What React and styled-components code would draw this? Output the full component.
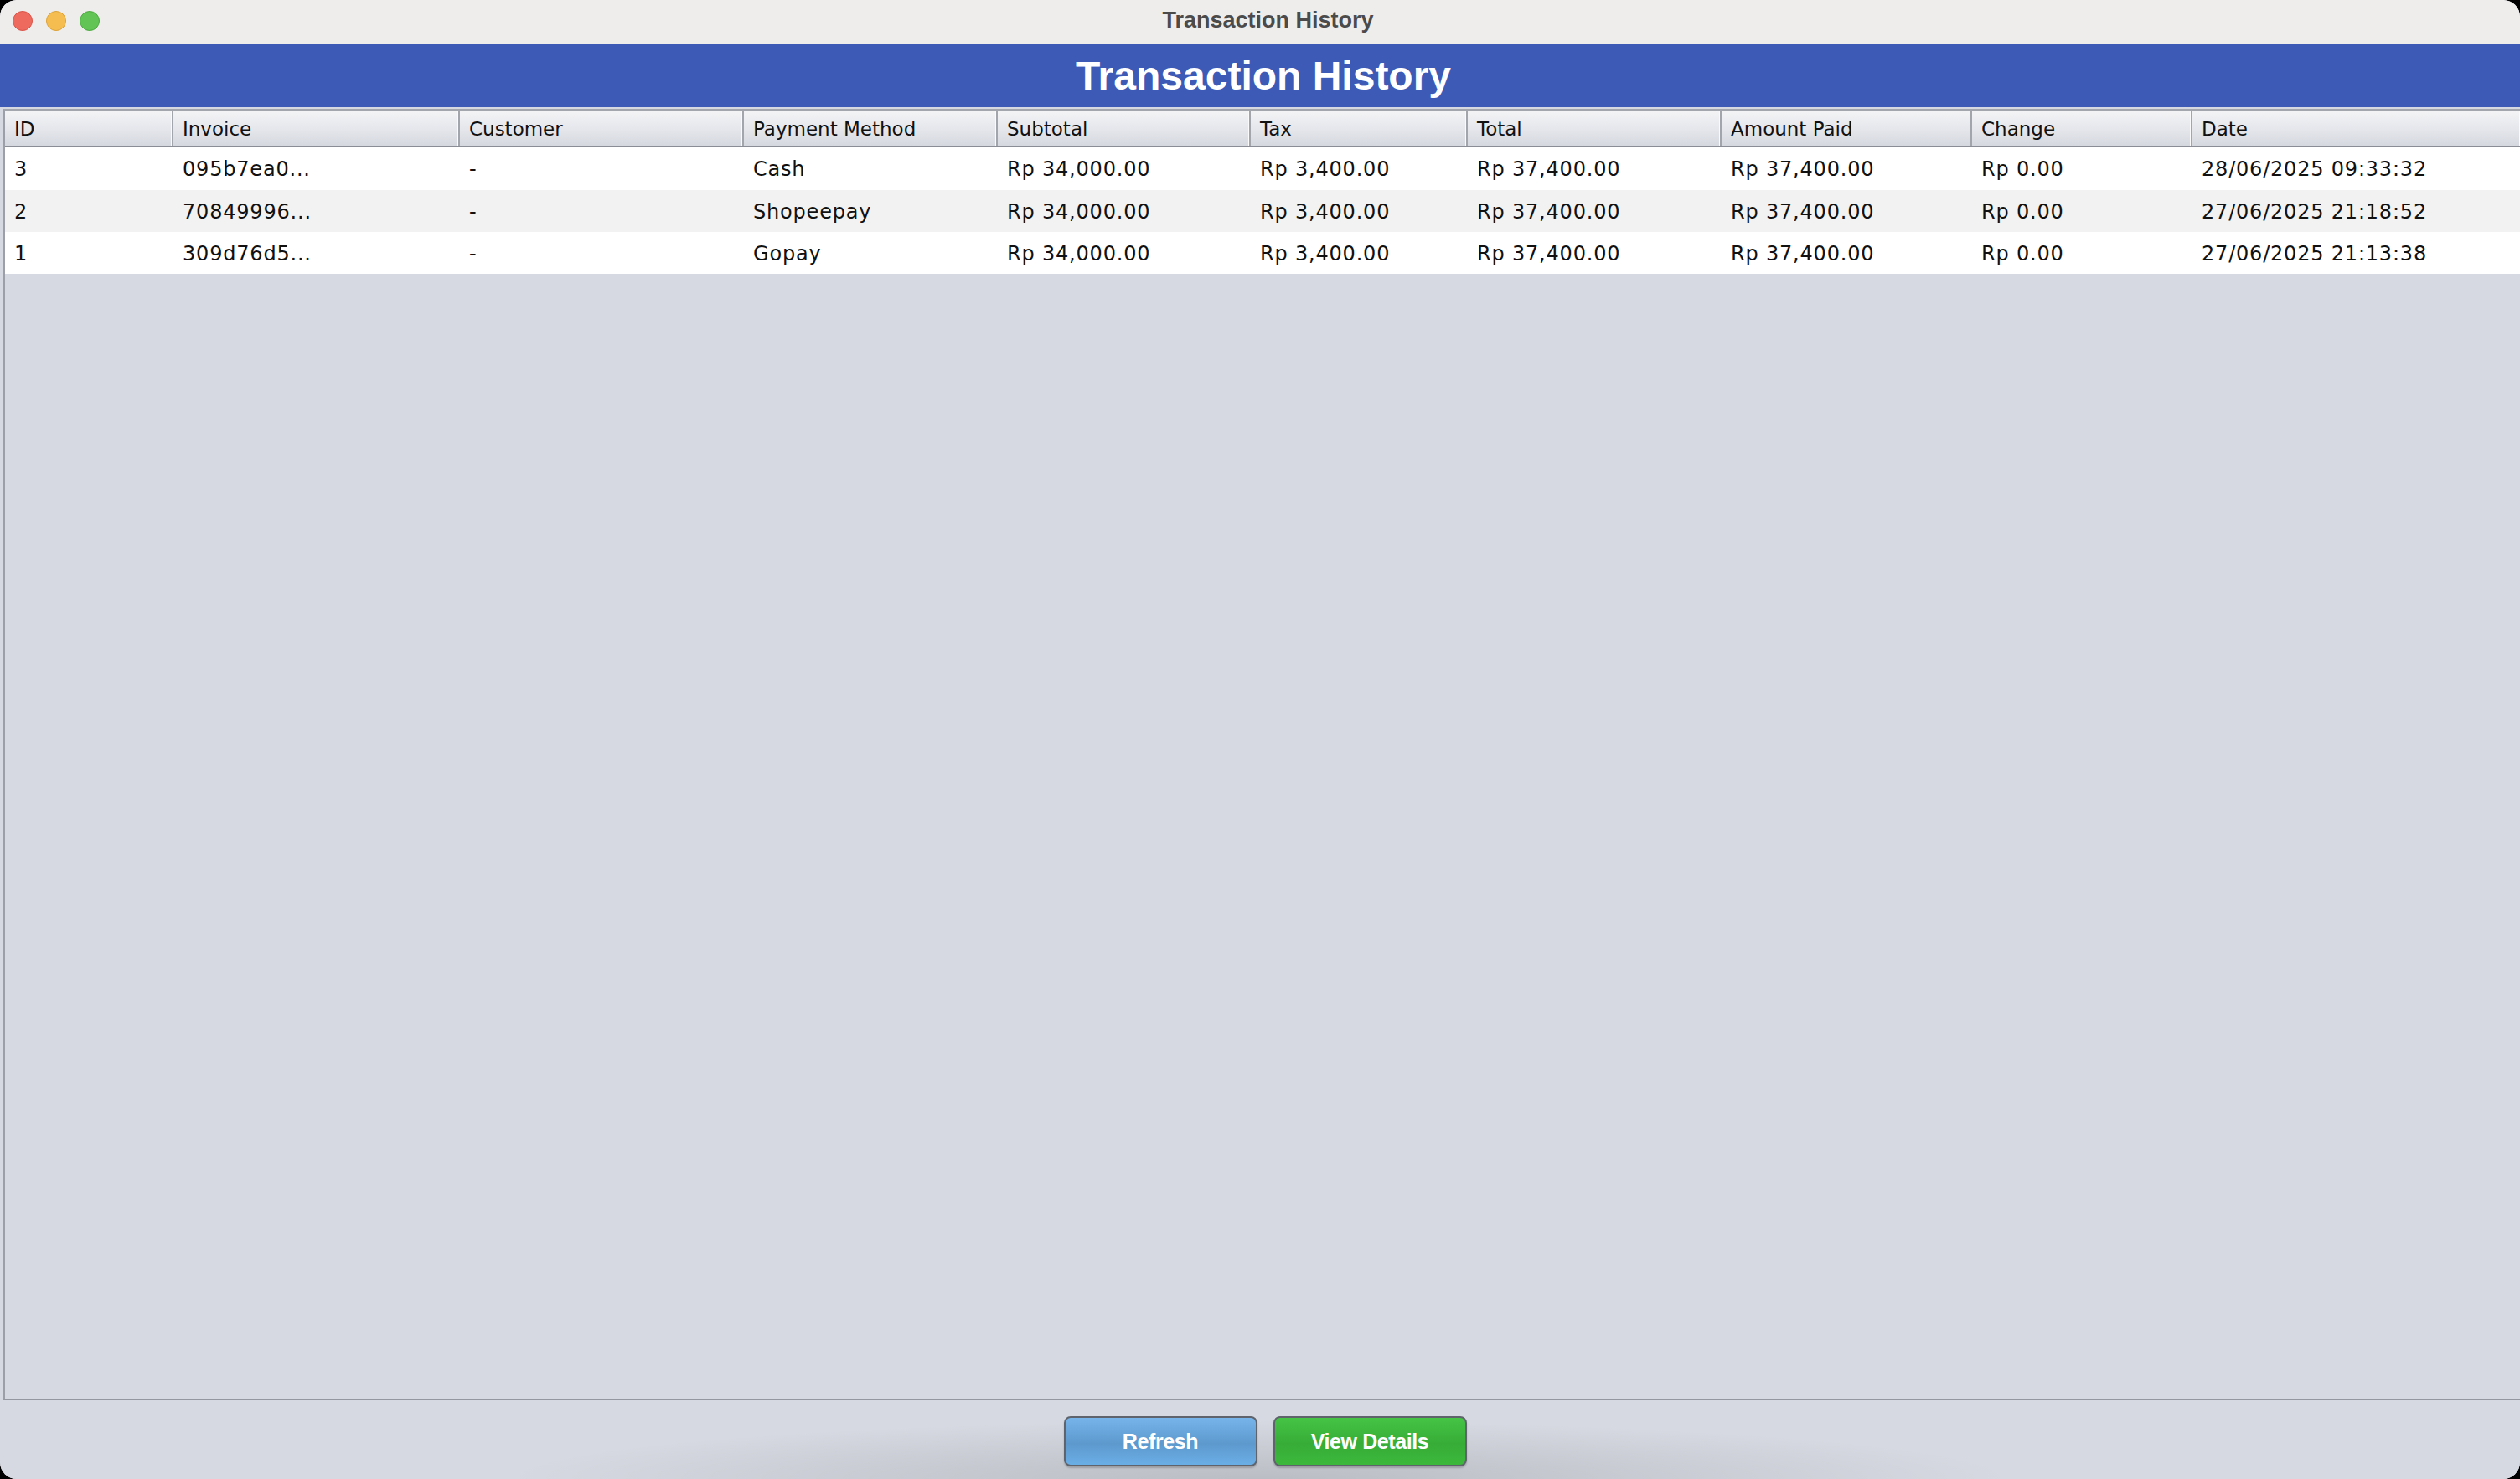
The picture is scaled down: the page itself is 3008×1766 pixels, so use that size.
import React from "react";
import styled, { createGlobalStyle } from "styled-components";

const GlobalStyle = createGlobalStyle`
  html, body {
    margin: 0;
    padding: 0;
    background: #000;
  }
  body {
    width: 3008px;
    height: 1766px;
    overflow: hidden;
    font-family: "DejaVu Sans", "Liberation Sans", sans-serif;
  }
`;

const columns = [
  { key: "id", label: "ID", width: 201 },
  { key: "invoice", label: "Invoice", width: 342 },
  { key: "customer", label: "Customer", width: 339 },
  { key: "method", label: "Payment Method", width: 303 },
  { key: "subtotal", label: "Subtotal", width: 302 },
  { key: "tax", label: "Tax", width: 259 },
  { key: "total", label: "Total", width: 303 },
  { key: "paid", label: "Amount Paid", width: 299 },
  { key: "change", label: "Change", width: 263 },
  { key: "date", label: "Date", width: null },
];

const transactions = [
  {
    id: "3",
    invoice: "095b7ea0...",
    customer: "-",
    method: "Cash",
    subtotal: "Rp 34,000.00",
    tax: "Rp 3,400.00",
    total: "Rp 37,400.00",
    paid: "Rp 37,400.00",
    change: "Rp 0.00",
    date: "28/06/2025 09:33:32",
  },
  {
    id: "2",
    invoice: "70849996...",
    customer: "-",
    method: "Shopeepay",
    subtotal: "Rp 34,000.00",
    tax: "Rp 3,400.00",
    total: "Rp 37,400.00",
    paid: "Rp 37,400.00",
    change: "Rp 0.00",
    date: "27/06/2025 21:18:52",
  },
  {
    id: "1",
    invoice: "309d76d5...",
    customer: "-",
    method: "Gopay",
    subtotal: "Rp 34,000.00",
    tax: "Rp 3,400.00",
    total: "Rp 37,400.00",
    paid: "Rp 37,400.00",
    change: "Rp 0.00",
    date: "27/06/2025 21:13:38",
  },
];

const gridTemplate = columns
  .map((c) => (c.width ? `${c.width}px` : "1fr"))
  .join(" ");

const App = () => {
  return (
    <>
      <GlobalStyle />
      <Window>
        {/* Title bar */}
        <TitleBar>
          <Lights>
            <Light $color="#ee6a5f" $edge="#d85448" />
            <Light $color="#f5bd4f" $edge="#dba23a" />
            <Light $color="#61c454" $edge="#4ca93f" />
          </Lights>
          <WindowTitle>Transaction History</WindowTitle>
          <span />
        </TitleBar>

        <Banner>Transaction History</Banner>

        {/* Table */}
        <TableFrame>
          <HeaderRow>
            {columns.map((c) => (
              <HeaderCell key={c.key}>{c.label}</HeaderCell>
            ))}
          </HeaderRow>
          {transactions.map((t, i) => (
            <Row key={t.id} $striped={i % 2 === 1}>
              {columns.map((c) => (
                <Cell key={c.key}>{t[c.key]}</Cell>
              ))}
            </Row>
          ))}
        </TableFrame>

        <Footer>
          <Button $variant="blue">Refresh</Button>
          <Button $variant="green">View Details</Button>
        </Footer>
      </Window>
    </>
  );
};

const Window = styled.div`
  width: 3008px;
  height: 1766px;
  display: flex;
  flex-direction: column;
  background: #d6d9e1;
  border-radius: 20px;
  overflow: hidden;
`;

const TitleBar = styled.div`
  height: 52px;
  flex-shrink: 0;
  display: grid;
  grid-template-columns: 1fr auto 1fr;
  align-items: center;
  background: #efedec;
  padding: 0 0 0 15px;
`;

const Lights = styled.div`
  display: flex;
  gap: 16px;
  align-items: center;
  margin-top: -2px;
`;

const Light = styled.span`
  width: 22px;
  height: 22px;
  border-radius: 50%;
  background: ${(p) => p.$color};
  border: 1px solid ${(p) => p.$edge};
`;

const WindowTitle = styled.div`
  font-family: "Liberation Sans", Arial, sans-serif;
  font-weight: 700;
  font-size: 27px;
  color: #4b4b4b;
  margin-top: -4px;
  padding-left: 4px;
`;

const Banner = styled.div`
  height: 75px;
  flex-shrink: 0;
  display: flex;
  align-items: center;
  justify-content: center;
  padding-left: 8px;
  background: #3c5ab6;
  border-top: 1px solid #2d49a2;
  color: #fff;
  font-family: "Liberation Sans", Arial, sans-serif;
  font-weight: 700;
  font-size: 48px;
`;

const TableFrame = styled.div`
  flex: 1;
  margin-top: 2px;
  margin-left: 4px;
  border-left: 2px solid #9c9fa7;
  border-top: 2px solid #a3a6ad;
  border-bottom: 2px solid #9497a0;
  background: #d6d9e1;
`;

const HeaderRow = styled.div`
  display: grid;
  grid-template-columns: ${gridTemplate};
  height: 42px;
  background: linear-gradient(#f4f4f6 0%, #e4e6eb 55%, #d5d8df 100%);
  border-bottom: 2px solid #8a8d95;
`;

const HeaderCell = styled.div`
  display: flex;
  align-items: center;
  padding-left: 11px;
  padding-top: 2px;
  font-size: 23px;
  color: #111;
  border-right: 2px solid #a2a5ac;
  box-shadow: inset -3px 0 0 -2px #fafafa;
  white-space: nowrap;
  overflow: hidden;

  &:last-child {
    border-right: none;
  }
`;

const Row = styled.div`
  display: grid;
  grid-template-columns: ${gridTemplate};
  height: 50px;
  background: ${(p) => (p.$striped ? "#f2f2f2" : "#ffffff")};

  &:nth-child(2) {
    height: 51px;
  }
`;

const Cell = styled.div`
  display: flex;
  align-items: center;
  padding-left: 11px;
  padding-top: 1px;
  font-size: 24px;
  letter-spacing: 0.8px;
  color: #111;
  white-space: nowrap;
  overflow: hidden;
`;

const Footer = styled.div`
  height: 94px;
  flex-shrink: 0;
  display: flex;
  justify-content: center;
  align-items: flex-start;
  gap: 19px;
  padding-top: 19px;
  padding-left: 12px;
  box-sizing: border-box;
  background: radial-gradient(
      ellipse 900px 70px at 50% 100%,
      rgba(0, 0, 0, 0.13),
      rgba(0, 0, 0, 0) 100%
    ),
    #d6d9e1;
`;

const Button = styled.button`
  width: 231px;
  height: 60px;
  border-radius: 8px;
  border: 2px solid #5f636b;
  box-shadow: 0 2px 2px rgba(0, 0, 0, 0.2);
  color: #fff;
  font-family: "Liberation Sans", Arial, sans-serif;
  font-weight: 700;
  font-size: 25px;
  letter-spacing: -0.4px;
  cursor: pointer;
  background: ${(p) =>
    p.$variant === "green"
      ? "linear-gradient(#45c445 0%, #37ad37 55%, #3cb83c 100%)"
      : "linear-gradient(#76b4ea 0%, #5d99cd 55%, #6aaee6 100%)"};
`;

export default App;
